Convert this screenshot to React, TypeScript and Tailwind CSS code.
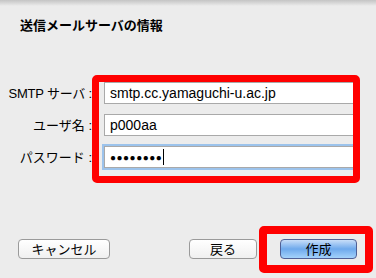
import React from 'react';

const fieldBase =
  'h-[22px] bg-white border border-[#a9a9a9] flex items-center pl-[5px] text-[14px] text-black';

const App: React.FC = () => {
  return (
    <div
      className="relative w-[376px] h-[278px] overflow-hidden bg-[#ececec] text-black"
      style={{ fontFamily: '"Liberation Sans", "Noto Sans CJK JP", sans-serif' }}
    >
      {/* top window shadow */}
      <div className="absolute left-0 top-0 w-full h-[6px] bg-gradient-to-b from-[#c4c4c4] to-[#ececec]" />

      <div className="relative pt-[17px] pl-[20px] text-[13px] font-bold leading-[18px]">
        送信メールサーバの情報
      </div>

      {/* form */}
      <div className="relative mt-[47px] flex flex-col gap-[10px]">
        <div className="flex items-center">
          <div className="w-[93px] text-right text-[13px] leading-none pr-[1px] tracking-[-0.2px]">SMTP サーバ :</div>
          <div className={`${fieldBase} ml-[11px] w-[252px]`}>smtp.cc.yamaguchi-u.ac.jp</div>
        </div>
        <div className="flex items-center">
          <div className="w-[93px] text-right text-[13px] leading-none pr-[1px]">ユーザ名 :</div>
          <div className={`${fieldBase} ml-[11px] w-[252px]`}>p000aa</div>
        </div>
        <div className="flex items-center">
          <div className="w-[93px] text-right text-[13px] leading-none pr-[1px]">パスワード :</div>
          <div
            className={`${fieldBase} ml-[11px] w-[252px] border-[#6b9fd6] shadow-[0_0_0_2px_#9cc3ec]`}
          >
            <span className="tracking-[0.5px] text-[10px]">●●●●●●●●</span>
            <span className="ml-[1px] w-px h-[16px] bg-black" />
          </div>
        </div>
      </div>

      {/* buttons */}
      <div className="absolute left-0 top-[239px] w-full flex items-center pl-[18px] pr-[19px]">
        <button className="w-[92px] h-[20px] rounded-[4px] border border-[#9a9a9a] bg-gradient-to-b from-white to-[#f0f0f0] text-[13px] leading-none">
          キャンセル
        </button>
        <div className="flex-1" />
        <button className="w-[68px] h-[20px] rounded-[4px] border border-[#9a9a9a] bg-gradient-to-b from-white to-[#f0f0f0] text-[13px] leading-none">
          戻る
        </button>
        <button className="ml-[23px] w-[77px] h-[20px] rounded-[4px] border border-[#4f5f95] bg-gradient-to-b from-[#c8def8] via-[#6ea9ec] to-[#a4d2fb] text-[13px] leading-none">
          作成
        </button>
      </div>

      {/* red annotation boxes */}
      <div className="absolute left-[92px] top-[75px] w-[268px] h-[108px] border-[7px] border-[#ff0000] rounded-[5px]" />
      <div className="absolute left-[259px] top-[226px] w-[114px] h-[47px] border-[8px] border-[#ff0000] rounded-[5px]" />
    </div>
  );
};

export default App;
